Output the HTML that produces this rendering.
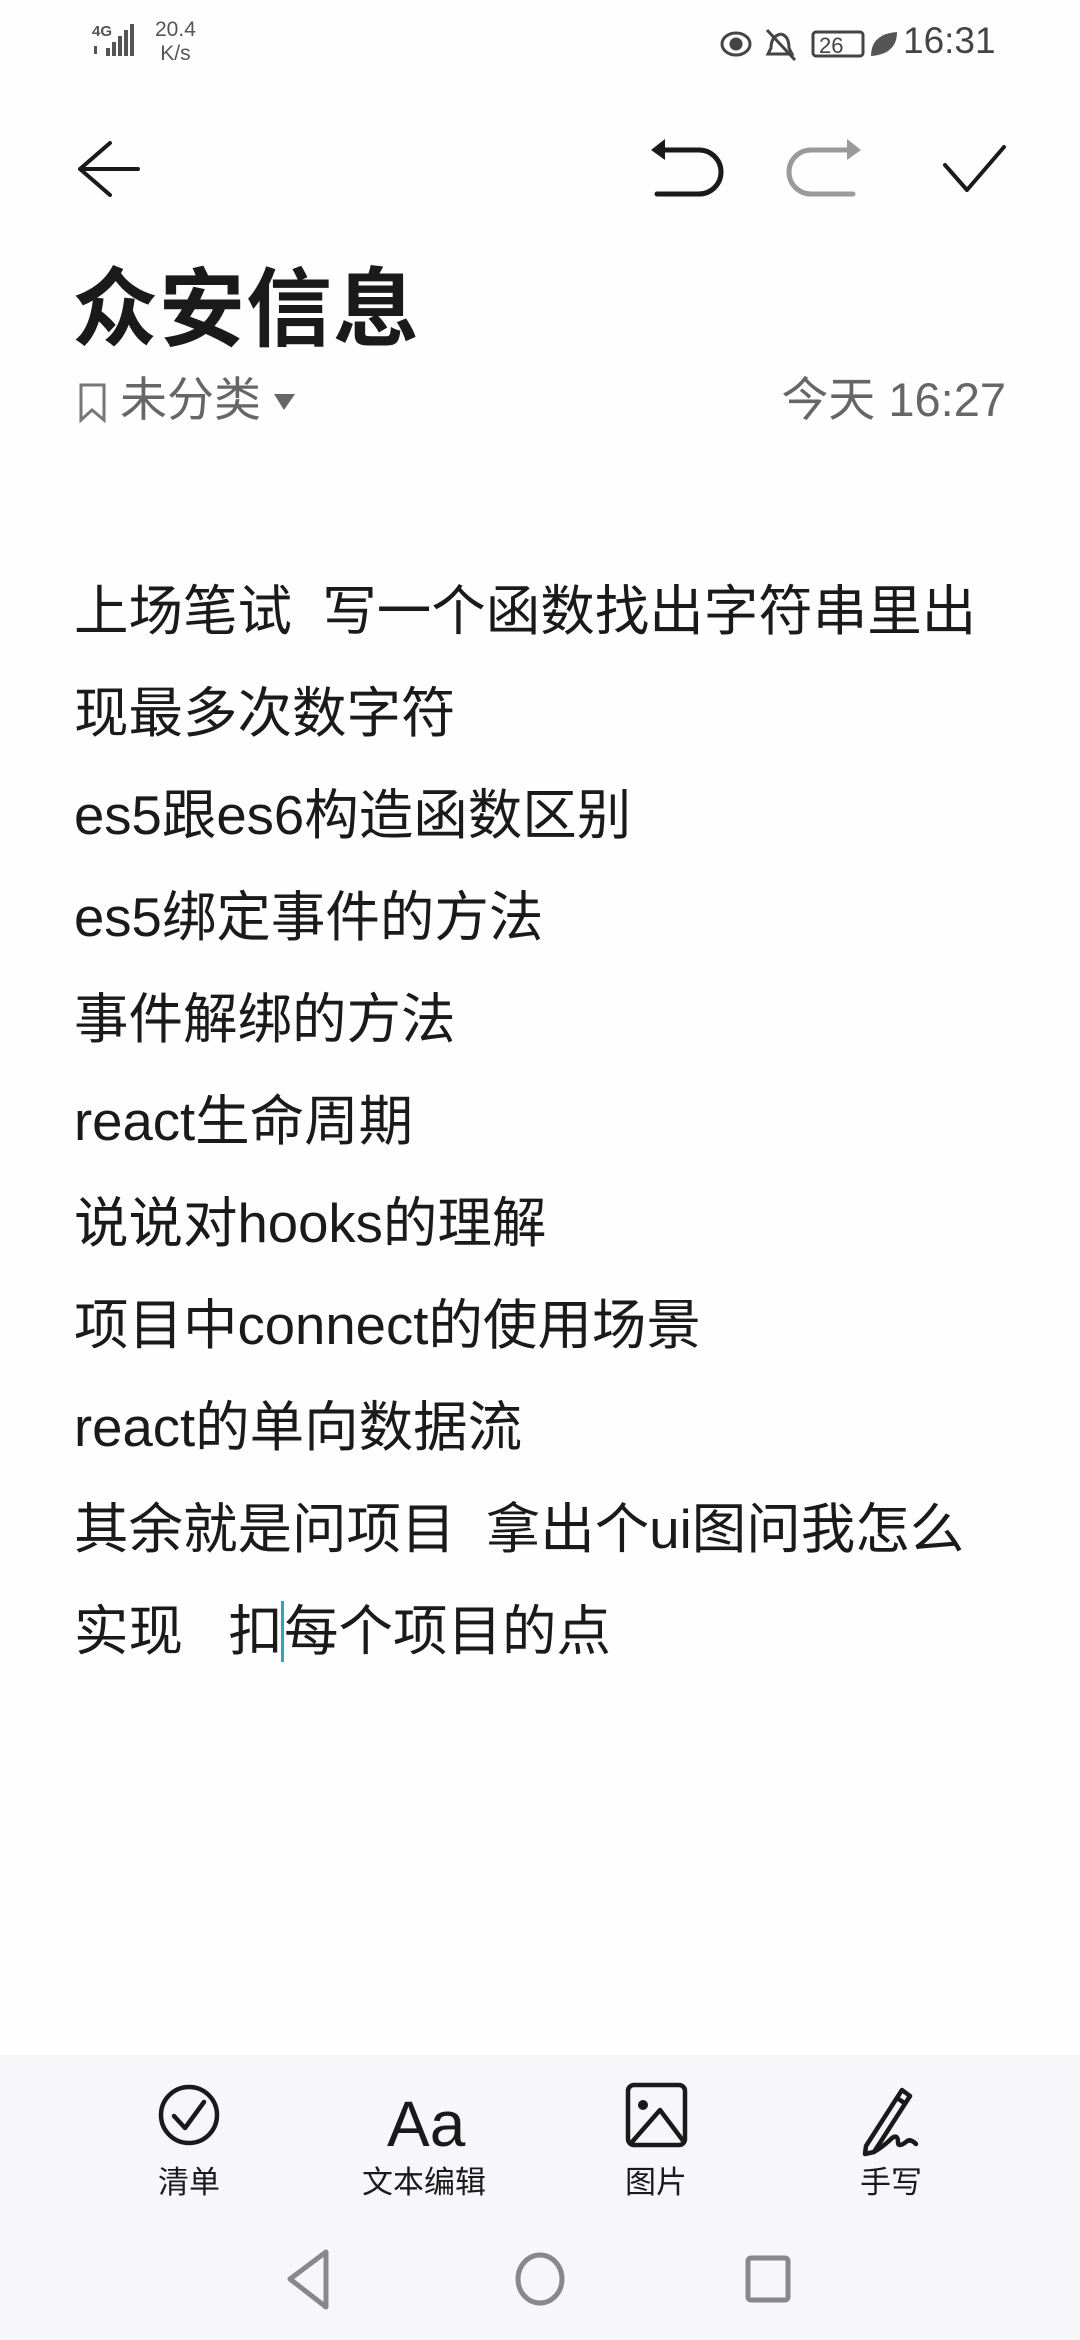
<!DOCTYPE html>
<html><head><meta charset="utf-8">
<style>
html,body{margin:0;padding:0;}
body{width:1080px;height:2340px;position:relative;background:#fefefe;overflow:hidden;font-family:"Liberation Sans","Noto Sans CJK SC",sans-serif;color:#1a1a1a;}
.abs{position:absolute;}
.body-text{position:absolute;left:74px;top:561px;font-size:54.5px;line-height:102px;white-space:pre;color:#1a1a1a;}
.toolbar{position:absolute;left:0;top:2055px;width:1080px;height:285px;background:#f7f7f9;}
.lbl{position:absolute;top:2157px;font-size:31px;width:200px;text-align:center;color:#1a1a1a;}
</style></head><body>
<!-- status bar -->
<div class="abs" style="left:92px;top:24px;font-size:15px;font-weight:bold;color:#555;line-height:15px">4G</div>
<svg class="abs" style="left:92px;top:22px" width="52" height="38">
<g fill="#555"><rect x="2" y="24" width="3" height="8"/><rect x="14" y="26" width="4" height="8"/><rect x="20" y="20" width="4" height="14"/><rect x="26" y="14" width="4" height="20"/><rect x="32" y="8" width="4" height="26"/><rect x="38" y="2" width="4" height="32"/></g></svg>
<div class="abs" style="left:155px;top:18px;font-size:21px;color:#555;line-height:24px;text-align:center">20.4<br>K/s</div>
<svg class="abs" style="left:715px;top:24px" width="200" height="40">
<g fill="none" stroke="#444" stroke-width="3"><ellipse cx="21" cy="20" rx="14" ry="11"/><circle cx="21" cy="20" r="5" fill="#444"/>
<path d="M66 10 q-10 2 -10 14 l-3 6 h24 l-3 -6 q0 -12 -8 -14 M52 6 l28 30"/>
<rect x="98" y="8" width="50" height="24" rx="3"/></g>
<text x="104" y="29" font-size="22" fill="#444" font-family="Liberation Sans">26</text>
<path d="M156 32 q0 -22 26 -24 q0 22 -26 24z" fill="#555"/></svg>
<div class="abs" style="left:903px;top:20px;font-size:37px;color:#444">16:31</div>
<!-- top bar -->
<svg class="abs" style="left:70px;top:135px" width="80" height="70"><path d="M40 8 L10 34 L40 60 M10 34 H68" fill="none" stroke="#1a1a1a" stroke-width="4" stroke-linecap="round" stroke-linejoin="round"/></svg>
<svg class="abs" style="left:645px;top:130px" width="400" height="75">
<g fill="none" stroke-width="5" stroke-linecap="round" stroke-linejoin="round">
<path d="M12 20 H54 A22 22 0 0 1 54 64 H12" stroke="#1a1a1a"/>
<path d="M208 20 H166 A22 22 0 0 0 166 64 H208" stroke="#9a9a9a"/>
<path d="M300 35 L322 60 L359 17" stroke="#1a1a1a" stroke-width="4"/></g>
<path d="M6 20 L20 9 L20 30z" fill="#1a1a1a"/><path d="M216 20 L202 9 L202 30z" fill="#9a9a9a"/></svg>
<!-- title -->
<div class="abs" style="left:72px;top:255px;font-size:86px;font-weight:bold;line-height:110px;letter-spacing:1px">众安信息</div>
<svg class="abs" style="left:78px;top:382px" width="30" height="42"><path d="M3 3 H26 V38 L14 28 L3 38z" fill="none" stroke="#777" stroke-width="3"/></svg>
<div class="abs" style="left:120px;top:370px;font-size:47px;color:#666;line-height:60px">未分类</div>
<svg class="abs" style="left:273px;top:392px" width="24" height="20"><path d="M1 2 H22 L11 18z" fill="#666"/></svg>
<div class="abs" style="right:74px;top:370px;font-size:47px;color:#666;line-height:60px">今天 16:27</div>
<!-- body -->
<div class="body-text">上场笔试  写一个函数找出字符串里出
现最多次数字符
es5跟es6构造函数区别
es5绑定事件的方法
事件解绑的方法
react生命周期
说说对hooks的理解
项目中connect的使用场景
react的单向数据流
其余就是问项目  拿出个ui图问我怎么
实现   扣<span style="border-left:3px solid #2aa6c8;margin-left:-2px"></span>每个项目的点</div>
<!-- toolbar -->
<div class="toolbar"></div>
<svg class="abs" style="left:0;top:2070px" width="1080" height="90">
<g fill="none" stroke="#1a1a1a" stroke-width="4.5" stroke-linecap="round" stroke-linejoin="round">
<circle cx="189" cy="45" r="28"/><path d="M174 46 L185 58 L204 32"/>
<rect x="628" y="15" width="57" height="60" rx="6"/><path d="M632 72 L660 40 L684 72"/>
<path d="M866 76 L902 20 L910 26 L874 82 L865 84z M903 32 L897 28"/><path d="M874 82 q10 -6 18 -14 q6 -4 6 4 q0 6 8 0 q4 -4 10 2"/></g>
<circle cx="643" cy="35" r="5" fill="#1a1a1a"/>
<text x="387" y="76" font-size="64" font-family="Liberation Sans" fill="#1a1a1a">Aa</text></svg>
<div class="lbl" style="left:89px">清单</div>
<div class="lbl" style="left:324px">文本编辑</div>
<div class="lbl" style="left:556px">图片</div>
<div class="lbl" style="left:791px">手写</div>
<!-- nav -->
<svg class="abs" style="left:0;top:2245px" width="1080" height="70">
<g fill="none" stroke="#888" stroke-width="5" stroke-linejoin="round">
<path d="M326 7 L290 34 L326 62z"/><ellipse cx="540" cy="34" rx="22" ry="24"/><rect x="748" y="13" width="40" height="42" rx="3"/></g></svg>
</body></html>
